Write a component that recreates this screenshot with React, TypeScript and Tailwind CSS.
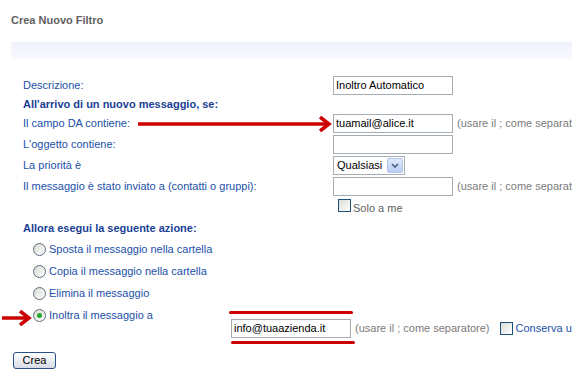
import React from "react";

const FONT = { fontFamily: '"Liberation Sans", Arial, sans-serif' };

function TextBox({ value = "", w = "w-[120px]" }: { value?: string; w?: string }) {
  return (
    <div className={`${w} h-[19px] shrink-0 border border-[#a5acb2] bg-white px-[2px] flex items-center text-[11px] text-black leading-none whitespace-nowrap overflow-hidden`}>
      {value}
    </div>
  );
}

function Hint() {
  return <span className="ml-[4px] shrink-0 text-[11px] text-[#7b7b7b] whitespace-nowrap">(usare il ; come separatore)</span>;
}

function CheckBox() {
  return <div className="w-[13px] h-[13px] border border-[#1c5180] bg-gradient-to-br from-[#dcdcd7] to-white shrink-0" />;
}

function Radio({ checked = false }: { checked?: boolean }) {
  return (
    <div className="w-[13px] h-[13px] rounded-full border border-[#5d6e80] bg-gradient-to-br from-[#d8d8d2] to-white flex items-center justify-center shrink-0">
      {checked && <div className="w-[5px] h-[5px] rounded-full bg-[#2aa62a]" />}
    </div>
  );
}

function Arrow({ width }: { width: number }) {
  return (
    <svg width={width} height="16" viewBox={`0 0 ${width} 16`}>
      <line x1="0" y1="8" x2={width - 3} y2="8" stroke="#cc0000" strokeWidth="3.5" />
      <polyline points={`${width - 12},1 ${width - 3},8 ${width - 12},15`} fill="none" stroke="#cc0000" strokeWidth="3.5" />
    </svg>
  );
}

function FieldRow({ label, children }: { label: string; children: React.ReactNode }) {
  return (
    <div className="h-[21px] flex items-center">
      <div className="w-[310px] shrink-0 text-[11px] text-[#2150a8] whitespace-nowrap">{label}</div>
      {children}
    </div>
  );
}

function RadioRow({ label, checked }: { label: string; checked?: boolean }) {
  return (
    <div className="h-[22px] flex items-center pl-[10px] gap-[3px]">
      <Radio checked={checked} />
      <span className="text-[11px] text-[#2150a8] whitespace-nowrap">{label}</span>
    </div>
  );
}

export default function App() {
  return (
    <div className="relative w-[572px] h-[390px] bg-white overflow-hidden" style={FONT}>
      <div className="pl-[11px] pt-[13px] text-[11px] font-bold text-[#5f5f5f] leading-[14px]">Crea Nuovo Filtro</div>
      <div className="ml-[11px] mt-[15px] h-[17px] bg-gradient-to-b from-[#eff2fb] to-[#f8fafe]" />

      <div className="pl-[23px] mt-[16px] flex flex-col">
        <FieldRow label="Descrizione:">
          <TextBox value="Inoltro Automatico" />
        </FieldRow>
        <div className="h-[17px] flex items-center text-[11px] font-bold text-[#1a3f94] whitespace-nowrap">
          All'arrivo di un nuovo messaggio, se:
        </div>
        <FieldRow label="Il campo DA contiene:">
          <TextBox value="tuamail@alice.it" />
          <Hint />
        </FieldRow>
        <FieldRow label="L'oggetto contiene:">
          <TextBox />
        </FieldRow>
        <FieldRow label="La priorità è">
          <div className="w-[72px] h-[19px] shrink-0 border border-[#a5acb2] bg-white flex items-center justify-between pl-[3px] pr-[1px] text-[11px] text-black">
            <span>Qualsiasi</span>
            <div className="w-[16px] h-[15px] rounded-[2px] border border-[#b3c6ea] bg-gradient-to-b from-[#dfe9fb] to-[#b9cdf3] flex items-center justify-center">
              <svg width="8" height="6" viewBox="0 0 8 6">
                <polyline points="1,1 4,4 7,1" fill="none" stroke="#4d6185" strokeWidth="1.6" />
              </svg>
            </div>
          </div>
        </FieldRow>
        <FieldRow label="Il messaggio è stato inviato a (contatti o gruppi):">
          <TextBox />
          <Hint />
        </FieldRow>
        <div className="h-[21px] flex items-end pl-[315px] pb-[3px]">
          <div className="flex items-end gap-[2px]">
            <div className="mb-[3px]">
              <CheckBox />
            </div>
            <span className="text-[11px] text-[#5f5f5f] leading-[13px]">Solo a me</span>
          </div>
        </div>
        <div className="h-[20px] flex items-center text-[11px] font-bold text-[#1a3f94] whitespace-nowrap">
          Allora esegui la seguente azione:
        </div>
        <RadioRow label="Sposta il messaggio nella cartella" />
        <RadioRow label="Copia il messaggio nella cartella" />
        <RadioRow label="Elimina il messaggio" />
        <div className="flex items-start">
          <div className="w-[208px] shrink-0">
            <RadioRow label="Inoltra il messaggio a" checked />
          </div>
          <div className="pt-[15px] flex items-center">
            <TextBox value="info@tuaazienda.it" />
            <Hint />
            <div className="ml-[10px] shrink-0 flex items-center gap-[3px]">
              <CheckBox />
              <span className="text-[11px] text-[#2150a8] whitespace-nowrap">Conserva una copia</span>
            </div>
          </div>
        </div>
      </div>

      <div className="pl-[13px] mt-[9px]">
        <button className="w-[43px] h-[17px] rounded-[3px] border border-[#2c4f8a] bg-gradient-to-b from-white to-[#d6dbe7] text-[11px] text-black leading-none">
          Crea
        </button>
      </div>

      {/* red annotations */}
      <div className="absolute left-[138px] top-[116px]">
        <Arrow width={194} />
      </div>
      <div className="absolute left-[2px] top-[310px]">
        <Arrow width={30} />
      </div>
      <div className="absolute left-[229px] top-[311px] w-[124px] h-[3px] bg-[#cc0000] rounded-full" />
      <div className="absolute left-[231px] top-[341px] w-[124px] h-[3px] bg-[#cc0000] rounded-full" />
    </div>
  );
}
